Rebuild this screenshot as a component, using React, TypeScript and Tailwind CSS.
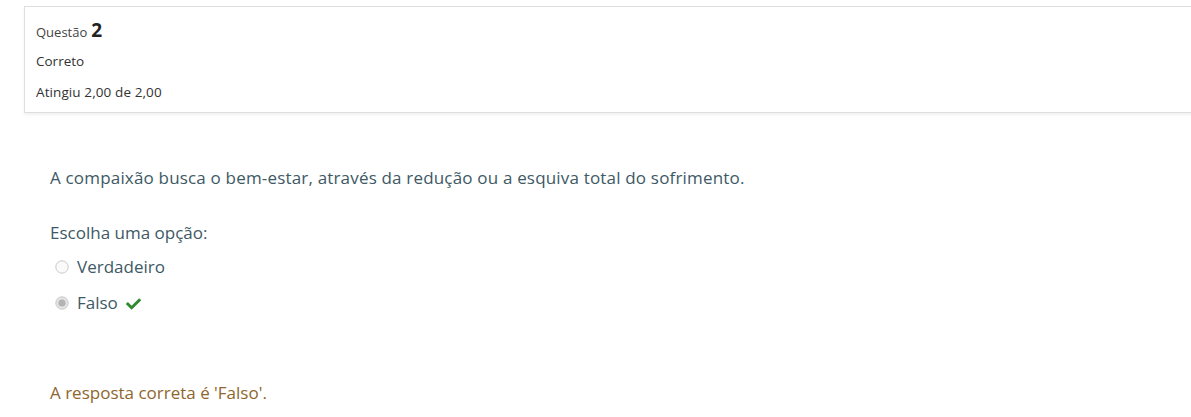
import React from "react";

function Radio({ checked }: { checked?: boolean }) {
  return (
    <svg width="14" height="14" viewBox="0 0 14 14" className="shrink-0">
      <circle cx="7" cy="7" r="6.2" fill={checked ? "#e4e4e4" : "#fafafa"} stroke="#c9c9c9" strokeWidth="1" />
      {checked && <circle cx="7" cy="7" r="3.6" fill="#b3b3b3" />}
    </svg>
  );
}

function Check() {
  return (
    <svg width="15" height="13" viewBox="0 0 512 420" className="shrink-0">
      <path
        fill="#2f8a2f"
        d="M173.9 410.5 7.5 244.1c-10-10-10-26.2 0-36.2l36.2-36.2c10-10 26.2-10 36.2 0L192 283.8 432.1 43.7c10-10 26.2-10 36.2 0l36.2 36.2c10 10 10 26.2 0 36.2L210.1 410.5c-10 10-26.2 10-36.2 0z"
      />
    </svg>
  );
}

export default function App() {
  return (
    <div className="w-[1191px] h-[417px] overflow-hidden bg-white" style={{ fontFamily: '"Open Sans", "Noto Sans", sans-serif' }}>
      <div className="ml-[24px] mt-[6px] h-[107px] w-[1200px] border border-[#dedede] shadow-[0_2px_3px_rgba(0,0,0,0.06)] pl-[11px] pt-[12px] text-[#333]">
        <div className="flex items-baseline h-[22px] leading-[22px]">
          <span className="text-[13px] text-[#444]">Questão</span>
          <span className="ml-[4px] text-[19px] font-bold text-[#222]">2</span>
        </div>
        <div className="mt-[9px] h-[22px] leading-[22px] text-[13.5px]">Correto</div>
        <div className="mt-[9px] h-[22px] leading-[22px] text-[13.5px] tracking-[0.1px]">Atingiu 2,00 de 2,00</div>
      </div>

      <div className="pl-[50px] text-[17px] text-[#3d5965]">
        <p className="mt-[54px] h-[22px] leading-[22px] tracking-[0.18px]">
          A compaixão busca o bem-estar, através da redução ou a esquiva total do sofrimento.
        </p>
        <p className="mt-[33px] h-[22px] leading-[22px]">Escolha uma opção:</p>
        <div className="mt-[12px] flex items-center h-[22px] pl-[5px] gap-[8px]">
          <Radio />
          <span className="leading-[22px]">Verdadeiro</span>
        </div>
        <div className="mt-[14px] flex items-center h-[22px] pl-[5px] gap-[8px]">
          <Radio checked />
          <span className="leading-[22px]">Falso</span>
          <span className="ml-[0px]"><Check /></span>
        </div>
        <p className="mt-[68px] h-[22px] leading-[22px] text-[#8e662e]">A resposta correta é 'Falso'.</p>
      </div>
    </div>
  );
}
